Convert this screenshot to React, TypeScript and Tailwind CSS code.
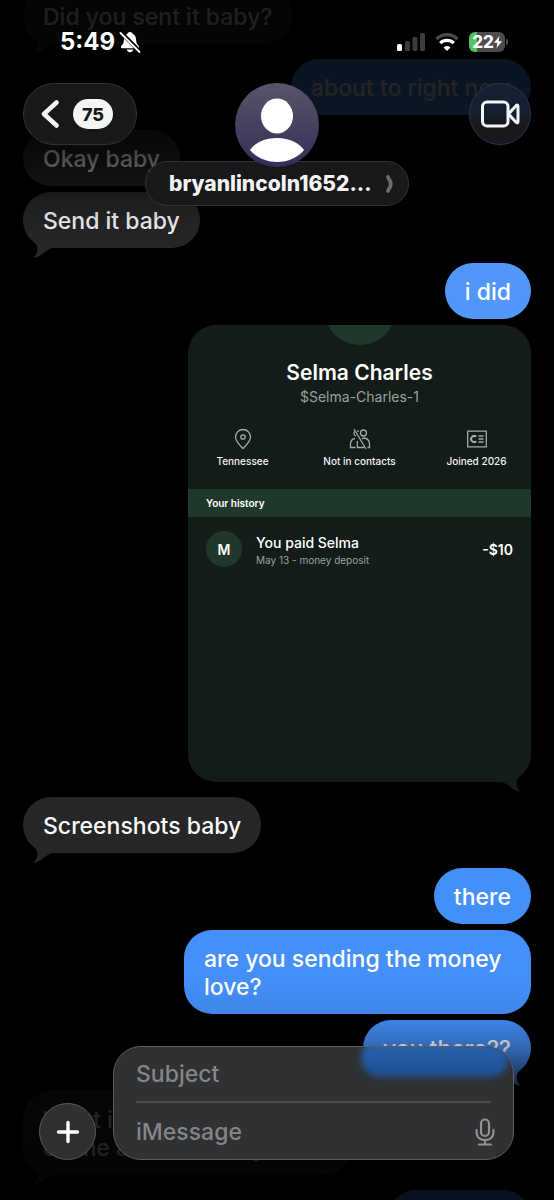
import { useState } from 'react'
import type { ReactNode } from 'react'

type Side = 'in' | 'out'

type Message = {
  text?: string
  card?: boolean
  tail?: boolean
}

type Group = {
  from: Side
  light?: boolean
  messages: Message[]
}

const THREAD: Group[] = [
  { from: 'in', messages: [{ text: 'Did you sent it baby?', tail: true }] },
  { from: 'out', light: true, messages: [{ text: 'about to right now' }] },
  { from: 'in', messages: [{ text: 'Okay baby' }, { text: 'Send it baby', tail: true }] },
  { from: 'out', light: true, messages: [{ text: 'i did' }, { card: true, tail: true }] },
  { from: 'in', messages: [{ text: 'Screenshots baby', tail: true }] },
  {
    from: 'out',
    messages: [
      { text: 'there' },
      { text: 'are you sending the money love?' },
      { text: 'you there??', tail: true },
    ],
  },
  { from: 'in', messages: [{ text: 'What is the name on your chime account baby', tail: true }] },
  { from: 'out', messages: [{ text: 'what for?' }] },
]

function Tail({ side, className }: { side: Side; className: string }) {
  return (
    <svg
      viewBox="0 0 28 24"
      aria-hidden="true"
      className={`absolute -bottom-[10px] h-6 w-7 ${side === 'in' ? 'left-1' : 'right-1 -scale-x-100'} ${className}`}
    >
      <path
        fill="currentColor"
        d="M0 0C3 6 10 9 10.500 14C10.800 18 9 20.500 7.300 22.500C6.500 23.500 7.500 24 8.600 23.600C14.500 22 18 16.500 25 14L28 14V0Z"
      />
    </svg>
  )
}

function Bubble({ side, light, tail, children }: { side: Side; light?: boolean; tail?: boolean; children: ReactNode }) {
  const incoming = side === 'in'
  const tone = incoming
    ? 'max-w-[328px] bg-[#262629] text-[#fafafa]'
    : `max-w-[347px] text-white ${light ? 'bg-[#5097f9]' : 'bg-[#448ff8]'}`
  return (
    <div className={`relative rounded-[28px] px-5 pt-[15px] pb-[13px] text-[23px] font-medium leading-7 ${tone}`}>
      {tail && <Tail side={side} className={incoming ? 'text-[#262629]' : 'text-[#448ff8]'} />}
      <p className="relative">{children}</p>
    </div>
  )
}

function Fact({ label, children }: { label: string; children: ReactNode }) {
  return (
    <div className="flex flex-col items-center gap-[2px]">
      <svg viewBox="0 0 24 24" aria-hidden="true" className="h-6 w-6 text-[#a3aaa6]" fill="none" stroke="currentColor" strokeWidth="1.300">
        {children}
      </svg>
      <span className="text-[10px] font-medium leading-4 text-[#f1f3f2]">{label}</span>
    </div>
  )
}

function PaymentCard() {
  return (
    <div className="relative w-[343px]">
      <Tail side="out" className="text-[#131c18]" />
      <div className="relative h-[457px] overflow-hidden rounded-[28px] bg-[#131c18]">
        <div className="flex h-5 items-end justify-center">
          <div className="h-[72px] w-[72px] shrink-0 rounded-full bg-[#1f382b]" />
        </div>
        <div className="mt-[14px] text-center">
          <h2 className="text-[21px] font-semibold leading-7 text-white">Selma Charles</h2>
          <p className="text-[14px] leading-5 text-[#9ca19f]">$Selma-Charles-1</p>
        </div>

        <div className="-mx-1 mt-5 grid grid-cols-3">
          <Fact label="Tennessee">
            <path d="M12 21.500C9 18.500 4.500 14.500 4.500 10A7.500 7.500 0 0 1 19.500 10C19.500 14.500 15 18.500 12 21.500Z" />
            <circle cx="12" cy="10" r="2.200" />
          </Fact>
          <Fact label="Not in contacts">
            <circle cx="15.500" cy="6" r="3" />
            <path d="M6.500 4.500A3 3 0 0 0 8 9M9.500 3.400L10.500 5M7 11.500C4 12 2.500 14 2.500 17V20.500H7.500M9.500 14C9 16 9.500 18 9.500 20.500H16M14 11.500C19 10.500 21.500 13 21.500 17V20.500H19.500M6 2L18 22" />
          </Fact>
          <Fact label="Joined 2026">
            <path d="M2.700 4.200H21.300V19.800H2.700Z" />
            <path d="M11.200 9.800A3 3 0 1 0 11.200 14.200" strokeWidth="2" />
            <path d="M13.500 9H18.500M13.500 12H18.500M13.500 15H18.500" strokeWidth="1.600" />
          </Fact>
        </div>

        <h3 className="mt-5 bg-[#1f382b] px-[18px] py-[6px] text-[10px] font-semibold leading-4 text-white">
          Your history
        </h3>
        <div className="flex items-center px-[18px] pt-[14px]">
          <div className="flex h-9 w-9 items-center justify-center rounded-full bg-[#1f382b] text-[14px] font-semibold text-white">
            M
          </div>
          <div className="ml-[14px] flex-1 pt-[2px]">
            <p className="text-[14px] font-medium leading-5 text-white">You paid Selma</p>
            <p className="text-[10px] leading-[14px] text-[#9ca19f]">May 13 - money deposit</p>
          </div>
          <span className="text-[14px] font-semibold text-white">-$10</span>
        </div>
      </div>
    </div>
  )
}

function StatusBar() {
  return (
    <div className="flex h-[83px] items-center justify-between pl-[60px] pr-[46px]">
      <div className="flex items-center gap-1">
        <span className="text-[24px] font-bold leading-7 text-white">5:49</span>
        <svg viewBox="0 0 22 22" className="h-[22px] w-[22px]" aria-label="Silent mode">
          <path
            fill="#fff"
            d="M11 1C12.500 1 13.300 1.700 13.600 2.800C16 3.800 17 6 17.100 9C17.200 12.500 18.500 13.500 19.700 15C20.500 16.200 20 17.200 18.800 17.200H3.200C2 17.200 1.500 16.200 2.300 15C3.500 13.500 4.800 12.500 4.900 9C5 6 6 3.800 8.400 2.800C8.700 1.700 9.500 1 11 1ZM7.800 18.500H14.200C13.800 20.200 12.700 21.200 11 21.200C9.300 21.200 8.200 20.200 7.800 18.500Z"
          />
          <path d="M2 1.500L21 20.500" stroke="#000" strokeWidth="4" />
          <path d="M1.500 2L20.500 21" stroke="#fff" strokeWidth="1.800" strokeLinecap="round" />
        </svg>
      </div>

      <div className="flex items-center gap-[10px]">
        <svg viewBox="0 0 28 18" className="h-[18px] w-7" aria-label="Signal">
          <rect x="0" y="11" width="5" height="7" rx="1.500" fill="#fff" />
          <rect x="8" y="8" width="5" height="10" rx="1.500" fill="#3c3c3e" />
          <rect x="15.500" y="4" width="5" height="14" rx="1.500" fill="#3c3c3e" />
          <rect x="23" y="0" width="5" height="18" rx="1.500" fill="#3c3c3e" />
        </svg>
        <svg viewBox="0 0 24 18" className="h-[18px] w-6" aria-label="Wi-Fi" fill="none" strokeWidth="3.200">
          <path d="M1.500 6A15 15 0 0 1 22.500 6" stroke="#4a4a4c" />
          <path d="M5.200 10.200A9.700 9.700 0 0 1 18.800 10.200" stroke="#fff" />
          <path d="M12 18L8.600 14.400A4.800 4.800 0 0 1 15.400 14.400Z" fill="#fff" />
        </svg>
        <div className="flex items-center gap-px">
          <div className="flex h-5 w-9 items-center justify-center rounded-md bg-linear-to-r from-[#4fc45a] from-22% to-[#4c4c4f] to-22%">
            <span className="text-[17px] font-extrabold leading-5 text-white">22</span>
            <svg viewBox="0 0 8 12" className="h-3 w-2" aria-label="Charging">
              <path fill="#fff" d="M5.500 0L0 6.800H3.400L2.500 12L8 5.200H4.600Z" />
            </svg>
          </div>
          <div className="h-[6px] w-[2px] rounded-r bg-[#4c4c4f]" />
        </div>
      </div>
    </div>
  )
}

function ChatHeader() {
  return (
    <header className="absolute inset-x-0 top-0">
      <StatusBar />
      <div className="grid grid-cols-[1fr_auto_1fr] items-start px-[23px]">
        <button
          type="button"
          aria-label="Back, 75 unread"
          className="flex h-[62px] w-[114px] items-center gap-[14px] rounded-full border border-[#323234] bg-[#18181a] pl-[17px]"
        >
          <svg viewBox="0 0 18 28" className="h-7 w-[18px]" aria-hidden="true">
            <path d="M15.500 2.500L3 14L15.500 25.500" fill="none" stroke="#f4f4f4" strokeWidth="4.500" strokeLinecap="round" strokeLinejoin="round" />
          </svg>
          <span className="flex h-[30px] w-10 items-center justify-center rounded-full bg-[#f4f4f4] text-[18px] font-extrabold text-[#18181a]">
            75
          </span>
        </button>

        <div className="flex flex-col items-center">
          <svg viewBox="0 0 84 84" className="relative z-10 h-[84px] w-[84px]" aria-label="Contact photo">
            <defs>
              <linearGradient id="avatar" x1="0" y1="0" x2="0" y2="1">
                <stop offset="0" stopColor="#5a5468" />
                <stop offset="1" stopColor="#342d58" />
              </linearGradient>
            </defs>
            <circle cx="42" cy="42" r="42" fill="url(#avatar)" />
            <ellipse cx="42" cy="33" rx="16" ry="17.500" fill="#fff" />
            <path d="M42 55C55 55 64 60 69 67C63 74.500 53 79 42 79C31 79 21 74.500 15 67C20 60 29 55 42 55Z" fill="#fff" />
          </svg>
          <button
            type="button"
            className="-mt-[6px] flex h-[45px] w-[264px] items-center gap-[14px] rounded-full border border-[#323234] bg-[#18181a] pl-[23px]"
          >
            <span className="text-[21px] font-extrabold text-[#f4f4f4]">bryanlincoln1652...</span>
            <svg viewBox="0 0 8 18" className="h-[18px] w-2" aria-hidden="true">
              <path d="M2 2L4.200 6.500Q5.200 9 4.200 11.500L2 16" fill="none" stroke="#6c6c6e" strokeWidth="3.800" strokeLinecap="round" />
            </svg>
          </button>
        </div>

        <button
          type="button"
          aria-label="Video call"
          className="flex h-[62px] w-[62px] items-center justify-center justify-self-end rounded-full border border-[#20384c] bg-linear-to-b from-[#142030] from-45% to-[#18181a] to-65%"
        >
          <svg viewBox="0 0 40 28" className="h-7 w-10" aria-hidden="true" fill="none" stroke="#f2f6fa" strokeWidth="3" strokeLinejoin="round">
            <rect x="2.500" y="2" width="25.500" height="24" rx="4.500" />
            <path d="M28.500 14L36 5.800Q38 4 38 6.500V21.500Q38 24 36 22.200Z" />
          </svg>
        </button>
      </div>
    </header>
  )
}

function Composer() {
  const [subject, setSubject] = useState('')
  const [body, setBody] = useState('')

  return (
    <form
      onSubmit={e => e.preventDefault()}
      className="absolute inset-x-0 bottom-0 flex items-end gap-[17px] pb-10 pl-[39px] pr-10"
    >
      <button
        type="button"
        aria-label="Add attachment"
        className="flex h-[57px] w-[57px] shrink-0 items-center justify-center rounded-full border border-[#5a5a5c] bg-[#303032]"
      >
        <svg viewBox="0 0 24 24" className="h-6 w-6" aria-hidden="true">
          <path d="M12 2.500V21.500M2.500 12H21.500" stroke="#fff" strokeWidth="3.400" strokeLinecap="round" />
        </svg>
      </button>

      <div className="relative flex-1 overflow-hidden rounded-[28px] border border-[#5c5d5f] bg-[#303133]">
        {/* blue bubble showing through the glass */}
        <div className="absolute right-1 -top-2 h-[38px] w-[148px] rounded-[20px] bg-linear-to-b from-[#2a65ae] to-[#1e5094] blur-[3px]" />
        <div className="relative px-[22px]">
          <input
            aria-label="Subject"
            placeholder="Subject"
            value={subject}
            onChange={e => setSubject(e.target.value)}
            className="block h-14 w-full border-b-2 border-[#4a4b4d] bg-transparent text-[23px] font-medium text-white outline-none placeholder:text-[#858587]"
          />
          <div className="flex h-14 items-center pt-[2px]">
            <input
              aria-label="iMessage"
              placeholder="iMessage"
              value={body}
              onChange={e => setBody(e.target.value)}
              className="min-w-0 flex-1 bg-transparent text-[23px] font-medium text-white outline-none placeholder:text-[#858587]"
            />
            <button type="button" aria-label="Dictate" className="-mr-1">
              <svg viewBox="0 0 20 28" className="h-7 w-5" aria-hidden="true" fill="none" stroke="#929294" strokeWidth="2.200" strokeLinecap="round">
                <rect x="6" y="1.500" width="8" height="16.500" rx="4" />
                <path d="M1.500 12V14C1.500 19 5 22 10 22C15 22 18.500 19 18.500 14V12M10 22V26.500M4 26.500H16" />
              </svg>
            </button>
          </div>
        </div>
      </div>
    </form>
  )
}

export default function App() {
  return (
    <main className="relative h-screen overflow-hidden bg-black font-['Inter','Liberation_Sans',sans-serif]">
      <div className="-mt-3 flex flex-col gap-[15px] px-[23px]">
        {THREAD.map((group, i) => (
          <section
            key={i}
            className={`flex flex-col gap-[6px] ${group.from === 'in' ? 'items-start' : 'items-end'}`}
          >
            {group.messages.map((message, j) =>
              message.card ? (
                <PaymentCard key={j} />
              ) : (
                <Bubble key={j} side={group.from} light={group.light} tail={message.tail}>
                  {message.text}
                </Bubble>
              )
            )}
          </section>
        ))}
      </div>

      {/* edge fades behind the bars */}
      <div className="pointer-events-none absolute inset-x-0 top-0 h-[250px] bg-[linear-gradient(to_bottom,rgba(0,0,0,.88)_0,rgba(0,0,0,.86)_115px,rgba(0,0,0,.7)_158px,rgba(0,0,0,.5)_186px,rgba(0,0,0,.25)_200px,rgba(0,0,0,.1)_220px,transparent_250px)]" />
      <div className="pointer-events-none absolute inset-x-0 bottom-0 h-[220px] bg-[linear-gradient(to_bottom,transparent_0,rgba(0,0,0,.08)_40px,rgba(0,0,0,.25)_65px,rgba(0,0,0,.6)_97px,rgba(0,0,0,.86)_112px,rgba(0,0,0,.88)_220px)]" />

      <ChatHeader />
      <Composer />
    </main>
  )
}
